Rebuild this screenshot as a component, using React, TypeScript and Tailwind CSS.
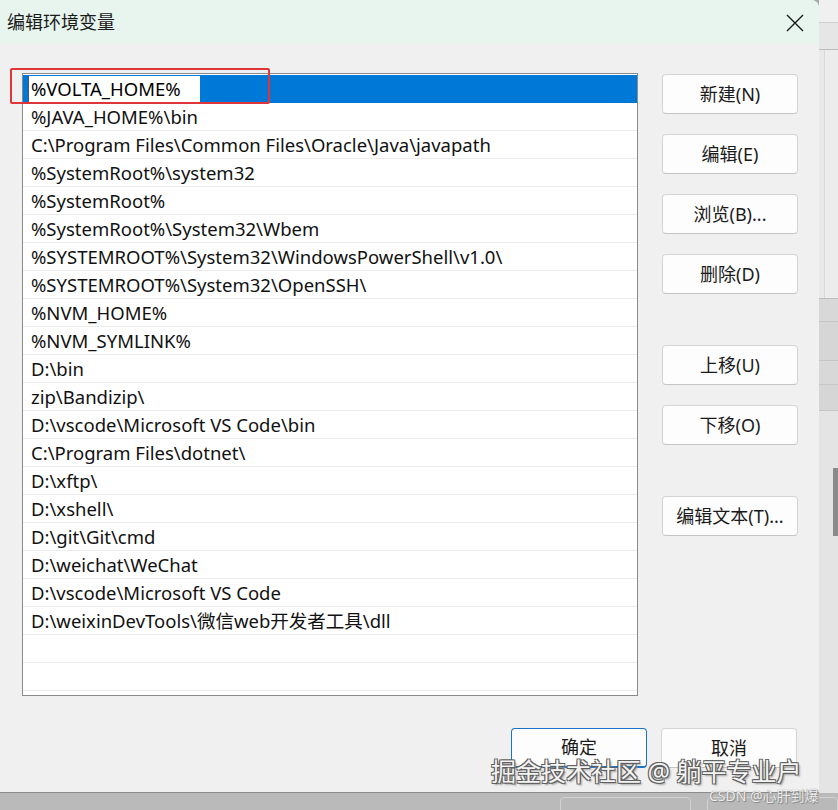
const paths = [
  "%VOLTA_HOME%",
  "%JAVA_HOME%\\bin",
  "C:\\Program Files\\Common Files\\Oracle\\Java\\javapath",
  "%SystemRoot%\\system32",
  "%SystemRoot%",
  "%SystemRoot%\\System32\\Wbem",
  "%SYSTEMROOT%\\System32\\WindowsPowerShell\\v1.0\\",
  "%SYSTEMROOT%\\System32\\OpenSSH\\",
  "%NVM_HOME%",
  "%NVM_SYMLINK%",
  "D:\\bin",
  "zip\\Bandizip\\",
  "D:\\vscode\\Microsoft VS Code\\bin",
  "C:\\Program Files\\dotnet\\",
  "D:\\xftp\\",
  "D:\\xshell\\",
  "D:\\git\\Git\\cmd",
  "D:\\weichat\\WeChat",
  "D:\\vscode\\Microsoft VS Code",
  "D:\\weixinDevTools\\微信web开发者工具\\dll",
  "",
  "",
];

const font = "font-['Noto_Sans','Noto_Sans_CJK_SC',sans-serif]";

function Btn({ label, primary = false, className = "" }: { label: string; primary?: boolean; className?: string }) {
  return (
    <div
      className={`w-[136px] h-[40px] rounded-[4px] bg-[#fdfdfd] flex items-center justify-center text-[18px] text-[#1a1a1a] ${
        primary ? "border border-[#1a73c8] border-b-2" : "border border-[#d4d4d4] border-b-[#c4c4c4]"
      } ${className}`}
    >
      {label}
    </div>
  );
}

export default function App() {
  return (
    <div className={`relative w-[838px] h-[810px] overflow-hidden bg-gradient-to-b from-[#a9a9a9] to-[#bababa] ${font}`}>
      <div className="flex h-[793px]">
        {/* 对话框 */}
        <div className="w-[819px] h-full bg-[#f0f0f0] rounded-tr-[8px] flex flex-col border-b border-[#8c8c8c] overflow-hidden">
          <div className="h-[44px] bg-[#e7f5ee] flex items-center justify-between pl-[7px] pr-[15px]">
            <span className="text-[18px] text-[#1a1a1a] leading-none">编辑环境变量</span>
            <svg width="18" height="18" viewBox="0 0 18 18" className="mt-[2px]">
              <path d="M1 1 L17 17 M17 1 L1 17" stroke="#1a1a1a" strokeWidth="1.4" />
            </svg>
          </div>

          <div className="flex pl-[22px] pt-[29px]">
            {/* 路径列表 */}
            <div className="w-[616px] h-[623px] border border-[#8a8a8a] bg-white pt-[1px]">
              {paths.map((p, i) => (
                <div
                  key={i}
                  className={`h-[28px] flex items-center border-b ${
                    i === 0 ? "bg-[#0078d7] border-[#0078d7] pl-[5px]" : "border-[#ececec] pl-[8px]"
                  }`}
                >
                  {i === 0 ? (
                    <div className="h-[26px] w-[172px] bg-white border-l border-[#555] flex items-center pl-[2px] text-[18.5px] text-black">
                      {p}
                    </div>
                  ) : (
                    <span className="text-[18.5px] text-[#111] whitespace-nowrap">{p}</span>
                  )}
                </div>
              ))}
            </div>

            {/* 操作按钮 */}
            <div className="ml-[24px] pt-[1px] flex flex-col gap-[20px]">
              <Btn label="新建(N)" />
              <Btn label="编辑(E)" />
              <Btn label="浏览(B)..." />
              <Btn label="删除(D)" />
              <Btn label="上移(U)" className="mt-[31px]" />
              <Btn label="下移(O)" />
              <Btn label="编辑文本(T)..." className="mt-[31px]" />
            </div>
          </div>

          <div className="flex justify-end gap-[14px] pr-[22px] mt-[32px]">
            <Btn label="确定" primary />
            <Btn label="取消" />
          </div>
        </div>

        {/* 背后窗口 */}
        <div className="flex-1 flex flex-col bg-[#e9e9e9]">
          <div className="h-[23px] bg-[#f0f0f0] border-b border-[#cfcfcf]" />
          <div className="h-[27px] bg-[#e6e6e6] border-b border-[#bdbdbd]" />
          <div className="h-[248px] bg-[#ececec] border-l border-[#dadada] ml-[5px]" />
          <div className="h-[23px] bg-[#d8d8d8] border-t border-[#bdbdbd]" />
          <div className="h-[39px] bg-[#d6d6d6] border-t border-[#c6c6c6]" />
          <div className="h-[24px] bg-[#d8d8d8] border-t border-[#c6c6c6]" />
          <div className="h-[27px] bg-[#d6d6d6] border-t border-[#c6c6c6] border-b border-[#8a8a8a]" />
          <div className="flex-1 flex justify-end bg-[#e4e4e4] pt-[57px]">
            <div className="w-[5px] h-[68px] bg-[#8a8a8a]" />
          </div>
        </div>
      </div>

      {/* 底部窗口按钮 */}
      <div className="flex gap-[16px] pl-[560px] pt-[4px]">
        <div className="w-[134px] h-[20px] rounded-t-[4px] bg-[#b9b9b9] border border-[#d2d2d2]" />
        <div className="w-[134px] h-[20px] rounded-t-[4px] bg-[#b9b9b9] border border-[#d2d2d2]" />
      </div>

      {/* 水印 */}
      <div className="absolute left-[491px] top-[753px] text-[25px] leading-[36px] text-[#f4f4f4] whitespace-nowrap [text-shadow:-1px_-1px_0_#5e5e5e,1px_-1px_0_#5e5e5e,-1px_1px_0_#5e5e5e,1px_1px_0_#5e5e5e,2px_2px_2px_#999]">
        掘金技术社区 @ 躺平专业户
      </div>
      <div className="absolute left-[709px] top-[786px] text-[14px] leading-[20px] text-[#eeeeee] whitespace-nowrap [text-shadow:0_0_1px_#777,1px_1px_1px_#888]">
        CSDN @心肝到爆
      </div>

      {/* 选中项标记 */}
      <div className="absolute left-[10px] top-[68px] w-[260px] h-[36px] border-2 border-[#e0363a] rounded-[2px]" />
    </div>
  );
}
